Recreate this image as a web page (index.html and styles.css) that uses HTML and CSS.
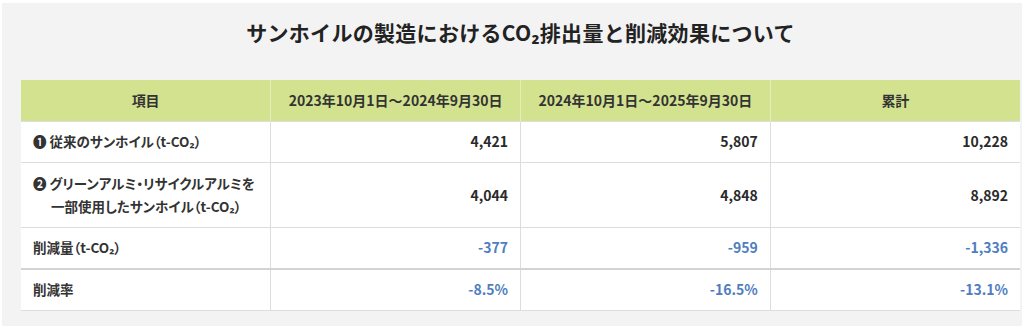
FILE: index.html
```html
<!DOCTYPE html>
<html lang="ja">
<head>
<meta charset="utf-8">
<link rel="stylesheet" href="styles.css">
</head>
<body>
<section class="panel">
  <h2 class="title">サンホイルの製造におけるCO₂排出量と削減効果について</h2>
  <table class="co2">
    <thead>
      <tr>
        <th>項目</th>
        <th>2023年10月1日～2024年9月30日</th>
        <th>2024年10月1日～2025年9月30日</th>
        <th>累計</th>
      </tr>
    </thead>
    <tbody>
      <tr>
        <td class="label">❶ 従来のサンホイル（t-CO₂）</td>
        <td class="num">4,421</td>
        <td class="num">5,807</td>
        <td class="num">10,228</td>
      </tr>
      <tr class="tall">
        <td class="label"><span class="mark">❷ </span>グリーンアルミ・リサイクルアルミを<br><span class="indent">一部使用したサンホイル（t-CO₂）</span></td>
        <td class="num">4,044</td>
        <td class="num">4,848</td>
        <td class="num">8,892</td>
      </tr>
      <tr class="sep">
        <td class="label">削減量（t-CO₂）</td>
        <td class="num neg">-377</td>
        <td class="num neg">-959</td>
        <td class="num neg">-1,336</td>
      </tr>
      <tr>
        <td class="label">削減率</td>
        <td class="num neg">-8.5%</td>
        <td class="num neg">-16.5%</td>
        <td class="num neg">-13.1%</td>
      </tr>
    </tbody>
  </table>
</section>
</body>
</html>
```

FILE: styles.css
```css
html, body {
  margin: 0;
  padding: 0;
  background: #ffffff;
}
body {
  font-family: "Noto Sans CJK JP", "Noto Sans", sans-serif;
  color: #333333;
}
.panel {
  margin: 3px 11px 0 2px;
  background: #f3f3f3;
  padding: 13px 2px 0 19px;
  height: 310px;
}
.title {
  margin: 0 0 32px 0;
  text-align: center;
  font-size: 21px;
  line-height: 32px;
  font-weight: 700;
  color: #222222;
  letter-spacing: 0.3px;
}
.co2 {
  width: 999px;
  border-collapse: collapse;
  table-layout: fixed;
  background: #ffffff;
  font-size: 14px;
  line-height: 23px;
  font-weight: 700;
}
.co2 th {
  background: #d3e28f;
  color: #333333;
  font-weight: 700;
  text-align: center;
  padding: 9px 12px 9px;
  border-left: 1px solid #e4ecc0;
}
.co2 th:first-child { border-left: none; }
.co2 td {
  padding: 8px 12px 9px;
  border-top: 1px solid #dddddd;
  border-left: 1px solid #dddddd;
  border-bottom: 1px solid #dddddd;
}
.co2 td:first-child { border-left: none; }
.co2 .tall td {
  padding-top: 9px;
}
.co2 .label {
  text-align: left;
  font-size: 13.5px;
  white-space: nowrap;
  font-feature-settings: "palt";
  color: #333333;
}
.co2 .num {
  text-align: right;
  color: #2a2a2a;
}
.co2 .neg {
  color: #4f7ec0;
  font-weight: 700;
}
.co2 .sep td {
  border-bottom: 2px solid #d3d3d3;
}
.indent {
  padding-left: 18px;
}
```
